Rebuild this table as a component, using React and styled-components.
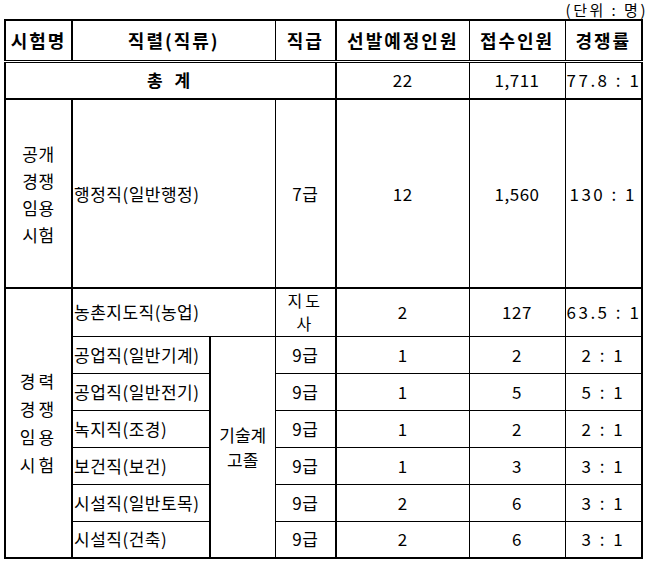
import React from 'react';
import styled, { createGlobalStyle } from 'styled-components';

const GlobalStyle = createGlobalStyle`
  body {
    margin: 0;
    background: #fff;
    font-family: "Noto Sans CJK KR", "Noto Sans", sans-serif;
    color: #000;
  }
`;

const Page = styled.div`
  width: 652px;
  padding: 0 0 0 4px;
  box-sizing: border-box;
`;

const TopBar = styled.div`
  display: flex;
  justify-content: space-between;
  align-items: flex-start;
  height: 19px;
  padding-right: 4px;
`;

/* bottom of a cut-off line above the table */
const Clipped = styled.div`
  height: 2px;
  overflow: hidden;
  margin-left: 38px;
  color: #b8b8b8;
  font-size: 16px;
  line-height: 16px;
  letter-spacing: 2px;

  span {
    display: block;
    margin-top: -14px;
  }
`;

const Unit = styled.div`
  font-size: 15px;
  line-height: 19px;
  letter-spacing: 2.5px;
  white-space: nowrap;
`;

const Table = styled.table`
  width: 639px;
  table-layout: fixed;
  border-collapse: collapse;
  border: 2px solid #000;
`;

const Cell = styled.td`
  border: 1px solid #000;
  padding: 0 1px;
  font-size: 17px;
  line-height: 20px;
  letter-spacing: 0.5px;
  white-space: nowrap;
  overflow: hidden;
  text-align: ${(p) => p.$align || 'center'};
  vertical-align: middle;
  font-weight: ${(p) => (p.$bold ? 700 : 400)};
  ${(p) => p.$thickRight && 'border-right-width: 2px;'}
  ${(p) => p.$thickLeft && 'border-left-width: 2px;'}
  ${(p) => p.$thickBottom && 'border-bottom-width: 2px;'}
`;

const HeadCell = styled.th`
  border: 1px solid #000;
  border-bottom: 3px double #000;
  padding: 0;
  font-size: 18px;
  font-weight: 700;
  letter-spacing: 2px;
  white-space: nowrap;
  text-align: center;
  vertical-align: middle;
  ${(p) => p.$thickRight && 'border-right-width: 2px;'}
`;

const Spaced = styled.span`
  letter-spacing: 4px;
`;

const Ratio = styled.span`
  letter-spacing: 2.5px;
`;

const Stack = styled.div`
  display: flex;
  flex-direction: column;
  align-items: center;
  font-size: ${(p) => p.$fs || 17}px;
  line-height: ${(p) => p.$lh}px;
  letter-spacing: ${(p) => p.$ls}px;
`;

const Row = styled.tr`
  height: ${(p) => p.$h}px;
`;

const cols = [67, 138, 65, 61, 133, 96, 77];

const careerRows = [
  ['공업직(일반기계)', '1', '2', '2 : 1'],
  ['공업직(일반전기)', '1', '5', '5 : 1'],
  ['녹지직(조경)', '1', '2', '2 : 1'],
  ['보건직(보건)', '1', '3', '3 : 1'],
  ['시설직(일반토목)', '2', '6', '3 : 1'],
  ['시설직(건축)', '2', '6', '3 : 1'],
];

export default function App() {
  return (
    <Page>
      <GlobalStyle />
      <TopBar>
        <Clipped>
          <span>ㅁ ㅁ</span>
        </Clipped>
        <Unit>(단위 : 명)</Unit>
      </TopBar>
      <Table>
        <colgroup>
          {cols.map((w, i) => (
            <col key={i} style={{ width: w }} />
          ))}
        </colgroup>
        <tbody>
          <Row $h={41}>
            <HeadCell $thickRight>시험명</HeadCell>
            <HeadCell colSpan={2}>직렬(직류)</HeadCell>
            <HeadCell $thickRight>직급</HeadCell>
            <HeadCell>선발예정인원</HeadCell>
            <HeadCell>접수인원</HeadCell>
            <HeadCell>경쟁률</HeadCell>
          </Row>
          <Row $h={38}>
            <Cell colSpan={4} $bold $thickRight $thickBottom>
              <Spaced>총 계</Spaced>
            </Cell>
            <Cell $thickBottom>22</Cell>
            <Cell $thickBottom>1,711</Cell>
            <Cell $thickBottom>
              <Ratio>77.8 : 1</Ratio>
            </Cell>
          </Row>
          <Row $h={189}>
            <Cell $thickRight $thickBottom>
              <Stack $lh={27} $ls={0.5}>
                <span>공개</span>
                <span>경쟁</span>
                <span>임용</span>
                <span>시험</span>
              </Stack>
            </Cell>
            <Cell colSpan={2} $align="left" $thickBottom>
              행정직(일반행정)
            </Cell>
            <Cell $thickRight $thickBottom>7급</Cell>
            <Cell $thickBottom>12</Cell>
            <Cell $thickBottom>1,560</Cell>
            <Cell $thickBottom>
              <Ratio>130 : 1</Ratio>
            </Cell>
          </Row>
          <Row $h={48}>
            <Cell rowSpan={7} $thickRight>
              <Stack $lh={28} $ls={3}>
                <span>경력</span>
                <span>경쟁</span>
                <span>임용</span>
                <span>시험</span>
              </Stack>
            </Cell>
            <Cell colSpan={2} $align="left">
              농촌지도직(농업)
            </Cell>
            <Cell $thickRight>
              <Stack $fs={16} $lh={23} $ls={3}>
                <span>지도</span>
                <span>사</span>
              </Stack>
            </Cell>
            <Cell>2</Cell>
            <Cell>127</Cell>
            <Cell>
              <Ratio>63.5 : 1</Ratio>
            </Cell>
          </Row>
          {careerRows.map(([name, sel, app, ratio], i) => (
            <Row key={name} $h={37}>
              <Cell $align="left" $thickRight>
                {name}
              </Cell>
              {i === 0 && (
                <Cell rowSpan={6}>
                  <Stack $lh={25} $ls={0}>
                    <span>기술계</span>
                    <span>고졸</span>
                  </Stack>
                </Cell>
              )}
              <Cell $thickRight>9급</Cell>
              <Cell>{sel}</Cell>
              <Cell>{app}</Cell>
              <Cell>
                <Ratio>{ratio}</Ratio>
              </Cell>
            </Row>
          ))}
        </tbody>
      </Table>
    </Page>
  );
}
